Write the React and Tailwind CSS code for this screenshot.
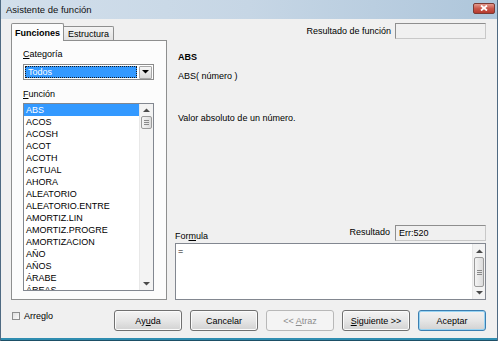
import React from 'react'

const funciones = [
  'ABS', 'ACOS', 'ACOSH', 'ACOT', 'ACOTH', 'ACTUAL', 'AHORA', 'ALEATORIO',
  'ALEATORIO.ENTRE', 'AMORTIZ.LIN', 'AMORTIZ.PROGRE', 'AMORTIZACION',
  'AÑO', 'AÑOS', 'ÁRABE', 'ÁREAS',
]

const Up = ({ color = '#4a4a4a' }) => (
  <svg width="7" height="4" viewBox="0 0 7 4">
    <path d="M0 4 L3.5 0.5 L7 4 Z" fill={color} />
  </svg>
)

const Down = ({ color = '#4a4a4a' }) => (
  <svg width="7" height="4" viewBox="0 0 7 4">
    <path d="M0 0 L3.5 3.5 L7 0 Z" fill={color} />
  </svg>
)

const Thumb = ({ className }) => (
  <div className={`mx-[1px] rounded-[2px] border border-[#9a9a9a] bg-gradient-to-r from-[#f4f4f4] to-[#dcdcdc] flex flex-col items-center justify-center gap-[1px] ${className}`}>
    <div className="w-[5px] h-px bg-[#8a8a8a]" />
    <div className="w-[5px] h-px bg-[#8a8a8a]" />
    <div className="w-[5px] h-px bg-[#8a8a8a]" />
  </div>
)

const Btn = ({ children, kind }) => {
  let cls = 'border-[#707070] bg-gradient-to-b from-[#f4f4f4] via-[#e6e6e6] to-[#d2d2d2] shadow-[inset_0_0_0_1px_#fbfbfb] text-black'
  if (kind === 'off') cls = 'border-[#b8b8b8] bg-[#f4f4f4] text-[#8c8c8c]'
  if (kind === 'def') cls = 'border-[#3c7fb1] bg-gradient-to-b from-[#f2f2f2] via-[#e6e6e6] to-[#d2d2d2] shadow-[inset_0_0_0_1px_#97d3f3] text-black'
  return (
    <div className={`w-[68px] h-[21px] rounded-[3px] border flex items-center justify-center ${cls}`}>
      {children}
    </div>
  )
}

const Field = ({ children }) => (
  <div className="h-[16px] w-[91px] border border-[#c8c8c8] border-t-[#8e8e8e] border-l-[#8e8e8e] bg-[#f0f0f0] pl-[3px] flex items-center">
    {children}
  </div>
)

export default function App() {
  return (
    <div className="w-[498px] h-[341px] flex flex-col bg-[#f0f0f0] border-l border-r border-[#4f6a82] text-black text-[9px] leading-[12px] font-['Liberation_Sans',Arial,sans-serif] overflow-hidden">
      {/* title */}
      <div className="h-[19px] shrink-0 flex items-center pl-[5px] pr-[2px] bg-gradient-to-r from-[#d2dfeb] via-[#c6d6e5] to-[#aec6db]">
        <span className="text-[9.5px] text-[#101010]">Asistente de función</span>
        <div className="ml-auto mb-[3px] w-[22px] h-[11px] rounded-[2px] border border-[#7a3a34] bg-gradient-to-b from-[#e2988c] via-[#c9574a] to-[#b53a2e] flex items-center justify-center">
          <svg width="8" height="6" viewBox="0 0 8 6">
            <path d="M1 0.5 L7 5.5 M7 0.5 L1 5.5" stroke="#fff" strokeWidth="1.8" />
          </svg>
        </div>
      </div>

      <div className="flex pl-[10px] pt-[4px] h-[281px] shrink-0">
        {/* left column */}
        <div className="w-[156px] flex flex-col">
          <div className="h-[17px] flex items-end">
            <div className="relative z-10 -mb-px w-[53px] h-[18px] bg-[#fcfcfc] border border-b-0 border-[#8e8f8f] rounded-t-[2px] flex items-center justify-center font-bold">
              Funciones
            </div>
            <div className="w-[50px] h-[14px] bg-gradient-to-b from-[#f4f4f4] to-[#e2e2e2] border border-b-0 border-l-0 border-[#8e8f8f] rounded-tr-[2px] flex items-center justify-center">
              Estructura
            </div>
          </div>
          <div className="h-[260px] border border-[#8e8f8f] bg-[#fcfcfc] pl-[11px] pt-[7px]">
            <div className="h-[12px]"><span className="underline">C</span>ategoría</div>
            <div className="mt-[4px] w-[131px] h-[16px] border border-[#8b8b8b] bg-white flex items-center p-px">
              <div className="flex-1 h-[12px] bg-[#3399ff] border border-dotted border-[#1a1a1a] text-white pl-[2px] flex items-center">Todos</div>
              <div className="ml-[2px] w-[13px] h-[13px] border border-[#a7a7a7] rounded-[1px] bg-gradient-to-b from-[#f6f6f6] to-[#dadada] flex items-center justify-center">
                <Down color="#000" />
              </div>
            </div>
            <div className="mt-[8px] h-[12px]"><span className="underline">F</span>unción</div>
            <div className="mt-[3px] w-[131px] h-[188px] border border-[#828790] bg-white flex overflow-hidden">
              <div className="flex-1 flex flex-col">
                {funciones.map((f, i) => (
                  <div key={f} className={`h-[12px] shrink-0 pl-[2px] flex items-center whitespace-nowrap ${i === 0 ? 'bg-[#3399ff] text-white' : ''}`}>
                    {f}
                  </div>
                ))}
              </div>
              <div className="w-[14px] bg-[#f3f3f3] border-l border-[#e8e8e8] flex flex-col">
                <div className="h-[12px] flex items-center justify-center"><Up /></div>
                <Thumb className="h-[13px]" />
                <div className="flex-1" />
                <div className="h-[12px] flex items-center justify-center"><Down /></div>
              </div>
            </div>
          </div>
        </div>

        {/* right column */}
        <div className="ml-[8px] w-[311px] flex flex-col">
          <div className="flex items-center justify-end gap-[4px]">
            <span>Resultado de función</span>
            <Field />
          </div>
          <div className="mt-[12px] ml-[3px] h-[12px] font-bold">ABS</div>
          <div className="mt-[7px] ml-[3px] h-[12px]">ABS( número )</div>
          <div className="mt-[30px] ml-[3px] h-[12px]">Valor absoluto de un número.</div>
          <div className="flex-1" />
          <div className="flex items-end justify-between">
            <div className="h-[12px] mb-[-1px]">For<span className="underline">m</span>ula</div>
            <div className="flex items-center gap-[5px]">
              <span className="mb-[3px]">Resultado</span>
              <Field>Err:520</Field>
            </div>
          </div>
          <div className="mt-[2px] h-[57px] border border-[#828790] bg-white flex">
            <div className="flex-1 pl-[2px] pt-[1px]">=</div>
            <div className="w-[13px] bg-[#f3f3f3] border-l border-[#e8e8e8] flex flex-col">
              <div className="h-[13px] flex items-center justify-center"><Up /></div>
              <Thumb className="h-[30px]" />
              <div className="flex-1 flex items-center justify-center"><Down /></div>
            </div>
          </div>
        </div>
      </div>

      {/* bottom row */}
      <div className="flex items-start pt-[10px] pl-[11px] pr-[11px]">
        <div className="h-[12px] flex items-center gap-[4px]">
          <div className="w-[8px] h-[8px] border border-[#8e8f8f] bg-gradient-to-br from-[#e0e0e0] to-[#fbfbfb]" />
          <span>Arreglo</span>
        </div>
        <div className="ml-auto flex gap-[8px]">
          <Btn>Ay<span className="underline">u</span>da</Btn>
          <Btn>Cancelar</Btn>
          <Btn kind="off">&lt;&lt; <span className="underline ml-[2px]">A</span>traz</Btn>
          <Btn><span className="underline">S</span>iguiente &gt;&gt;</Btn>
          <Btn kind="def">Aceptar</Btn>
        </div>
      </div>

      <div className="mt-auto h-[3px] shrink-0 bg-[#2f8db0] border-b border-[#1d4f66]" />
    </div>
  )
}
